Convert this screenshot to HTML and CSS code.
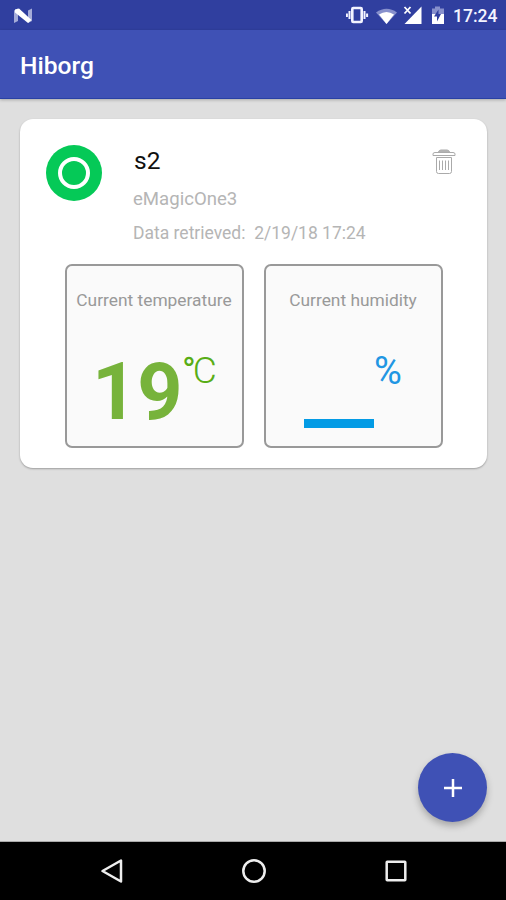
FILE: index.html
```
<!DOCTYPE html>
<html lang="en">
<head>
<meta charset="utf-8">
<title>Hiborg</title>
<link rel="stylesheet" href="styles.css">
</head>
<body>
<div class="screen">
  <header class="status">
    <svg class="logo" width="20" height="16" viewBox="0 0 20 16"><path d="M1 2.500L5 .500V13L1 15Z" fill="#a5acd8"/><path d="M15 2.500L19 .500V13L15 15Z" fill="#a5acd8"/><path d="M2 1.500L6 .500L18.500 12L15 15L2 4.500Z" fill="#fff"/></svg>
    <svg class="icons" width="101" height="22" viewBox="0 0 101 22">
      <g fill="none" stroke="#f3f4ff" stroke-width="2.600"><rect x="6.300" y="4" width="9.400" height="14" rx="1"/><path d="M3.500 7v8M18.500 7v8M.900 9.500v3.500M21.100 9.500v3.500" stroke-width="2"/></g>
      <path d="M30 8.500Q40.500 1 51 8.500L40.500 20Z" fill="#8790cc"/><path d="M33 10.500Q40.500 5.500 48 10.500L40.500 20Z" fill="#fff"/>
      <path d="M75.500 2.500V20H58.500Z" fill="#fff"/><path d="M57 2.500H66V11.500L57 12Z" fill="#303f9f"/><path d="M58.500 3l6 6.500M64.500 3l-6 6.500" stroke="#fff" stroke-width="1.800"/>
      <path d="M89 2.500h5v2h4v6H86V4.500h3Z" fill="#8790cc"/><path d="M86 10h12v10H86Z" fill="#fff"/><path d="M92.500 5.500L88 12.500h3v5l4-7.500h-2.500Z" fill="#303f9f"/>
    </svg>
    <span class="clock">17:24</span>
  </header>
  <div class="appbar"><h1>Hiborg</h1></div>
  <main class="content">
    <section class="card">
      <div class="device">
        <div class="state"><span class="ring"></span></div>
        <div class="info">
          <h2>s2</h2>
          <p class="model">eMagicOne3</p>
          <p class="time">Data retrieved:&nbsp; <span>2/19/18 17:24</span></p>
        </div>
        <svg class="trash" width="24" height="26" viewBox="0 0 24 26" fill="none" stroke="#aaa" stroke-width="1"><path d="M6.500 3Q7 1 9 1H15Q17 1 17.500 3Z" fill="#bbb"/><path d="M1 6.500V5Q1 3.500 3 3.500H21Q23 3.500 23 5V6.500Z"/><path d="M4.500 8.500H19.500V22.500Q19.500 24.500 17.500 24.500H6.500Q4.500 24.500 4.500 22.500Z"/><path d="M7.500 11.500v9.500M10.500 11.500v9.500M13.500 11.500v9.500M16.500 11.500v9.500"/></svg>
      </div>
      <div class="meters">
        <div class="meter temp"><p>Current temperature</p><div class="reading"><strong>19</strong><span class="unit"><span class="degree">°</span>C</span></div></div>
        <div class="meter hum"><p>Current humidity</p><div class="reading"><span class="empty"></span><span class="unit">%</span></div></div>
      </div>
    </section>
    <button class="fab" aria-label="Add"><svg width="18" height="18" viewBox="0 0 18 18"><path d="M9 0v18M0 9h18" stroke="#fff" stroke-width="2.500"/></svg></button>
  </main>
  <nav class="nav">
    <svg width="24" height="26" viewBox="0 0 24 26"><path d="M2.500 13L21 2.500V23.500Z"/></svg>
    <svg width="26" height="26" viewBox="0 0 26 26"><circle cx="12" cy="13" r="10.700"/></svg>
    <svg width="22" height="22" viewBox="0 0 22 22"><rect x="1.700" y="1.700" width="18.600" height="18.600" rx=".5"/></svg>
  </nav>
</div>
</body>
</html>
```
FILE: styles.css
```
* { box-sizing: border-box; margin: 0; }
body { font-family: Roboto, sans-serif; }
.screen { width: 506px; height: 900px; display: flex; flex-direction: column; background: #dfdfdf; overflow: hidden; }
.status { height: 30px; flex: none; background: #303f9f; display: flex; align-items: center; padding: 0 9px 0 13px; }
.logo { margin-top: 1px; }
.icons { margin: 0 6px 0 auto; }
.clock { color: #f3f4ff; font-size: 17.500px; font-weight: 500; line-height: 30px; width: 44px; margin-top: 2px; white-space: nowrap; }
.appbar { height: 69px; flex: none; background: #3f51b5; border-bottom: 1px solid #2941a4; box-shadow: 0 1px 3px rgba(0,0,0,.25); padding: 20px 20px 0; z-index: 1; }
h1 { font-size: 24.600px; line-height: 32px; font-weight: 500; color: #fff; }
.content { flex: 1; display: flex; flex-direction: column; justify-content: space-between; padding: 20px 19px 19px 20px; border-bottom: 1px solid #aaa; }
.card { height: 349px; background: #fff; border-radius: 13px; box-shadow: 0 1px 2px rgba(0,0,0,.3); padding: 26px 32px 0 26px; }
.device { display: flex; height: 119px; align-items: flex-start; }
.state { width: 56px; height: 56px; border-radius: 50%; background: #05c957; display: grid; place-items: center; flex: none; }
.ring { width: 32px; height: 32px; border: 4.500px solid #fff; border-radius: 50%; }
.info { margin-left: 32px; flex: 1; }
h2 { font-size: 24.500px; line-height: 32px; font-weight: 400; color: #111; }
.model { font-size: 18.600px; line-height: 26px; margin-top: 9px; margin-left: -1px; color: #b5b5b5; }
.time { font-size: 17.500px; line-height: 24px; margin-top: 9px; margin-left: -1px; color: #b5b5b5; white-space: nowrap; }
.trash { margin-top: 4px; flex: none; margin-right: -1px; }
.meters { display: flex; gap: 20px; margin-left: 19px; }
.meter { width: 179px; height: 184px; border: 2px solid #999; border-radius: 7px; background: #fafafa; }
.meter p { text-align: center; font-size: 17.350px; line-height: 24px; margin-top: 22px; margin-left: -1px; color: #999; white-space: nowrap; }
.reading { display: flex; height: 100px; padding-top: 29px; }
.temp { color: #77b33b; }
.temp .reading { padding-left: 25px; }
strong { font-size: 79px; line-height: 102px; font-weight: 700; width: 90px; }
.unit { font-size: 39px; line-height: 60px; font-weight: 400; }
.temp .unit { color: #58ad16; font-weight: 300; font-size: 37px; letter-spacing: -3px; }
.degree { font-weight: 400; }
.hum .unit { color: #2196e3; font-size: 38px; }
.hum .reading { padding-left: 38px; }
.empty { width: 70px; height: 9px; margin-top: 78px; background: #039be5; }
.fab { align-self: flex-end; width: 69px; height: 69px; border: 0; padding: 0; border-radius: 50%; background: #3f51b5; display: grid; place-items: center; box-shadow: 0 4px 7px rgba(0,0,0,.25); }
.nav { height: 58px; flex: none; background: #000; display: flex; align-items: center; justify-content: space-between; padding: 0 99px 0 100px; }
.nav svg { fill: none; stroke: #eee; stroke-width: 2.500; stroke-linejoin: round; }
```
